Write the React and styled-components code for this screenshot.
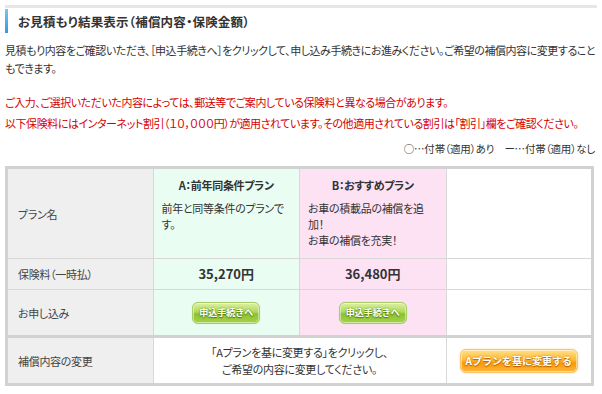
import React from "react";
import styled, { createGlobalStyle } from "styled-components";

const Global = createGlobalStyle`
  html, body { margin: 0; padding: 0; background: #fff; }
  body {
    font-family: "Noto Sans CJK JP", "Noto Sans", sans-serif;
    font-feature-settings: "palt";
    color: #333;
    font-size: 11px;
  }
`;

const Page = styled.div`
  width: 592px;
  padding: 5px 5px 0 5px;
`;

const Heading = styled.h2`
  margin: 0;
  border-top: 3px solid #e6e6e6;
  display: flex;
  align-items: center;
  height: 27px;
`;

const HeadBar = styled.span`
  width: 3px;
  align-self: stretch;
  margin: 1px 0 2px 0;
  background: linear-gradient(#7cc4f0, #2e9ae0);
`;

const HeadText = styled.span`
  margin-left: 10px;
  font-size: 12.5px;
  font-weight: bold;
  color: #333;
  letter-spacing: 0.2px;
`;

const Lead = styled.p`
  margin: 6px 0 0 0;
  line-height: 18px;
  font-size: 11px;
  letter-spacing: -0.45px;
`;

const Notice = styled.p`
  margin: ${(p) => p.$top}px 0 0 0;
  color: #d40000;
  line-height: 18px;
  font-size: 11px;
  letter-spacing: -0.45px;
`;

const Legend = styled.div`
  margin-top: 9px;
  text-align: right;
  font-size: 10.5px;
  line-height: 16px;
  padding-right: 2px;
  letter-spacing: -0.2px;
`;

const Table = styled.table`
  margin-top: 9px;
  width: 589px;
  border-collapse: collapse;
  border: 3px solid #d2d2d2;
  table-layout: fixed;
`;

const Row = styled.tr`
  height: ${(p) => p.$h}px;
  ${(p) => p.$thick && "border-top: 3px solid #d2d2d2;"}
`;

const Label = styled.th`
  background: #efefef;
  border: 1px solid #d8d8d8;
  text-align: left;
  font-weight: normal;
  padding: 0 10px;
  font-size: 11px;
  color: #444;
  letter-spacing: -0.3px;
`;

const Cell = styled.td`
  background: ${(p) => p.$bg || "#fff"};
  border: 1px solid #d8d8d8;
  padding: 0 8px;
  text-align: ${(p) => (p.$center ? "center" : "left")};
  vertical-align: ${(p) => p.$valign || "middle"};
  font-size: 11px;
  line-height: 17px;
  letter-spacing: -0.3px;
`;

const PlanTitle = styled.div`
  text-align: center;
  font-weight: bold;
  margin: 8px 0 6px;
`;

const PlanDesc = styled.div`
  line-height: 16px;
  padding-bottom: 10px;
`;

const Price = styled.span`
  font-size: 13px;
  font-weight: bold;
  color: #333;
  letter-spacing: 0;
`;

const GreenButton = styled.button`
  display: inline-block;
  font-family: inherit;
  font-size: 9px;
  font-weight: bold;
  color: #fff;
  text-shadow: 0 0 2px #5a8a10, 0 1px 1px #4d7a0c;
  padding: 0 6px;
  height: 22px;
  border: 1px solid #a8cc66;
  border-radius: 6px;
  background: linear-gradient(#dcf0a4 0%, #b0d85c 45%, #8cc232 55%, #a4d24a 100%);
  box-shadow: inset 0 0 0 1px rgba(255,255,255,0.5), 0 0 1px #b9d98a;
  cursor: pointer;
`;

const OrangeButton = styled.button`
  display: inline-block;
  font-family: inherit;
  font-size: 10px;
  font-weight: bold;
  color: #fff;
  text-shadow: 0 0 2px #c06a00, 0 1px 1px #b06000;
  padding: 0;
  height: 24px;
  width: 118px;
  border: 1px solid #f7c46a;
  border-radius: 6px;
  background: linear-gradient(#ffe08a 0%, #ffbb33 45%, #f99a05 60%, #ffb640 100%);
  box-shadow: inset 0 0 0 1px rgba(255,255,255,0.5), 0 0 2px #fbd79a;
  cursor: pointer;
`;

export default function App() {
  return (
    <Page>
      <Global />
      <Heading>
        <HeadBar />
        <HeadText>お見積もり結果表示（補償内容・保険金額）</HeadText>
      </Heading>
      <Lead>
        見積もり内容をご確認いただき、［申込手続きへ］をクリックして、申し込み手続きにお進みください。ご希望の補償内容に変更することもできます。
      </Lead>
      <Notice $top={16}>
        ご入力、ご選択いただいた内容によっては、郵送等でご案内している保険料と異なる場合があります。
      </Notice>
      <Notice $top={3}>
        以下保険料にはインターネット割引（１０，０００円）が適用されています。その他適用されている割引は「割引」欄をご確認ください。
      </Notice>
      <Legend>○…付帯（適用）あり　ー…付帯（適用）なし</Legend>
      <Table>
        <tbody>
          <Row $h={88}>
            <Label>プラン名</Label>
            <Cell $bg="#eafdf2" $valign="top">
              <PlanTitle>A：前年同条件プラン</PlanTitle>
              <PlanDesc>前年と同等条件のプランです。</PlanDesc>
            </Cell>
            <Cell $bg="#fde2f4" $valign="top">
              <PlanTitle>B：おすすめプラン</PlanTitle>
              <PlanDesc>
                お車の積載品の補償を追加！
                <br />
                お車の補償を充実！
              </PlanDesc>
            </Cell>
            <Cell />
          </Row>
          <Row $h={31}>
            <Label>保険料（一時払）</Label>
            <Cell $bg="#eafdf2" $center>
              <Price>35,270円</Price>
            </Cell>
            <Cell $bg="#fde2f4" $center>
              <Price>36,480円</Price>
            </Cell>
            <Cell />
          </Row>
          <Row $h={47}>
            <Label>お申し込み</Label>
            <Cell $bg="#eafdf2" $center>
              <GreenButton>申込手続きへ</GreenButton>
            </Cell>
            <Cell $bg="#fde2f4" $center>
              <GreenButton>申込手続きへ</GreenButton>
            </Cell>
            <Cell />
          </Row>
          <Row $h={48} $thick>
            <Label>補償内容の変更</Label>
            <Cell colSpan={2} $center>
              「Aプランを基に変更する」をクリックし、
              <br />
              ご希望の内容に変更してください。
            </Cell>
            <Cell $center>
              <OrangeButton>Aプランを基に変更する</OrangeButton>
            </Cell>
          </Row>
        </tbody>
      </Table>
    </Page>
  );
}
